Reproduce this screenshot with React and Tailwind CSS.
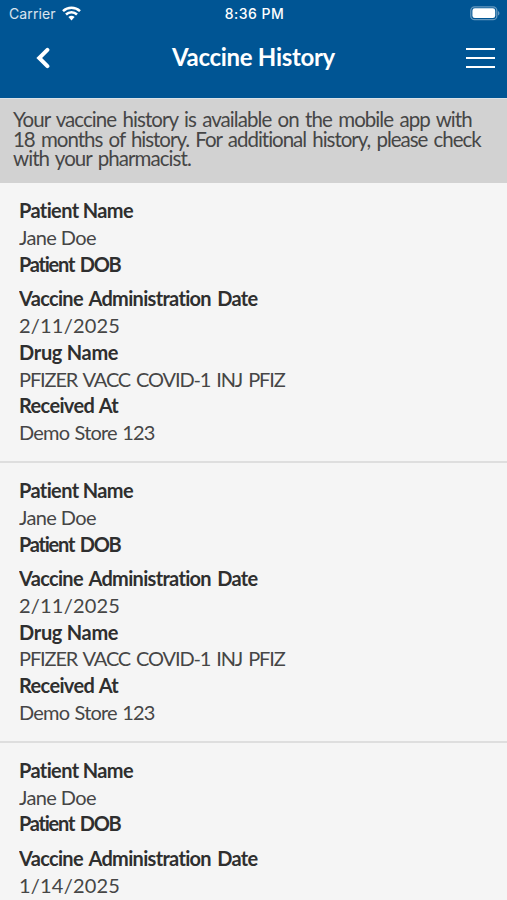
import { clsx } from "clsx";

const records = [
  { name: "Jane Doe", date: "2/11/2025", drug: "PFIZER VACC COVID-1 INJ PFIZ", store: "Demo Store 123" },
  { name: "Jane Doe", date: "2/11/2025", drug: "PFIZER VACC COVID-1 INJ PFIZ", store: "Demo Store 123" },
  { name: "Jane Doe", date: "1/14/2025" },
];

function StatusBar() {
  return (
    <div className="grid h-[27px] grid-cols-3 items-center pr-[7px] pl-[9px] font-['Inter',sans-serif] text-[14px]">
      <div className="flex items-center gap-[6px]">
        <span className="tracking-[0.1px] text-white/85">Carrier</span>
        <svg width="19" height="15" viewBox="0 0 19 15" fill="none" stroke="white" strokeWidth="2.5">
          <path d="M1 5.1a12.3 12.3 0 0 1 17 0" />
          <path d="M4 8.5a7.8 7.8 0 0 1 11 0" />
          <path d="M9.5 14.4 6.4 11.1a4.5 4.5 0 0 1 6.2 0Z" fill="white" stroke="none" />
        </svg>
      </div>
      <span className="text-center font-medium tracking-[0.5px] whitespace-nowrap">8:36 PM</span>
      <svg className="justify-self-end" width="30" height="15" viewBox="0 0 30 15">
        <rect x="0.8" y="0.8" width="26" height="12.9" rx="3.8" fill="none" stroke="white" strokeOpacity="0.4" strokeWidth="1.3" />
        <rect x="2.4" y="2.3" width="22.8" height="9.8" rx="2.4" fill="white" />
        <path d="M28.2 5v4.6c1.6-.8 1.6-3.8 0-4.6Z" fill="white" fillOpacity="0.5" />
      </svg>
    </div>
  );
}

function Header() {
  return (
    <header className="h-[98px] shrink-0 bg-[#005594] text-white">
      <StatusBar />
      <div className="grid h-[61px] grid-cols-[100px_1fr_100px] items-center">
        <svg className="ml-[36px]" width="15" height="22" viewBox="0 0 15 22" fill="none" stroke="white" strokeWidth="4" strokeLinecap="round">
          <path d="M11.4 2.8 3.2 11l8.2 8.2" />
        </svg>
        <h1 className="pb-[2px] text-center text-[24px] font-bold tracking-[-0.3px] whitespace-nowrap">Vaccine History</h1>
        <div className="mr-[12px] flex flex-col gap-[7px] justify-self-end">
          <span className="h-[2px] w-[29px] bg-white" />
          <span className="h-[2px] w-[29px] bg-white" />
          <span className="h-[2px] w-[29px] bg-white" />
        </div>
      </div>
    </header>
  );
}

function Row({ children, className }) {
  return <div className={clsx("h-[26.8px] overflow-hidden leading-[26.8px] whitespace-nowrap", className)}>{children}</div>;
}

function Label({ children, className }) {
  return <Row className={clsx("text-[20px] font-bold text-[#2f2f2f]", className)}>{children}</Row>;
}

function Value({ children, className }) {
  return <Row className={clsx("text-[20px] text-[#464646]", className)}>{children}</Row>;
}

function Record({ record }) {
  return (
    <article className="h-[279.8px] shrink-0 border-b-2 border-[#dedede] pt-[14.2px] pl-[19px]">
      <Label className="tracking-[-0.62px]">Patient Name</Label>
      <Value className="tracking-[-0.62px]">{record.name}</Value>
      <Label className="tracking-[-1.25px] [word-spacing:2px]">Patient DOB</Label>
      <Label className="mt-[7.6px] tracking-[-0.68px] [word-spacing:2px]">Vaccine Administration Date</Label>
      <Value className="tracking-[0.2px]">{record.date}</Value>
      {record.drug && (
        <>
          <Label className="tracking-[-0.3px]">Drug Name</Label>
          <Value className="tracking-[-1.13px] [word-spacing:2px]">{record.drug}</Value>
        </>
      )}
      {record.store && (
        <>
          <Label className="tracking-[-0.65px] [word-spacing:1px]">Received At</Label>
          <Value className="tracking-[-0.8px] [word-spacing:1px]">{record.store}</Value>
        </>
      )}
    </article>
  );
}

export default function App() {
  return (
    <main className="flex h-[900px] w-[507px] flex-col overflow-hidden bg-[#f5f5f5] font-['Lato',sans-serif]">
      <Header />
      <div className="h-[85px] shrink-0 border-t border-[#d9e2e8] bg-[#d2d2d2] pt-[11px] pl-[13px] text-[20.5px] leading-[19.7px] whitespace-nowrap text-[#464646] [word-spacing:2px]">
        <p className="tracking-[-0.94px]">Your vaccine history is available on the mobile app with</p>
        <p className="tracking-[-1.02px]">18 months of history. For additional history, please check</p>
        <p className="tracking-[-0.94px]">with your pharmacist.</p>
      </div>
      {records.map((record, i) => (
        <Record key={i} record={record} />
      ))}
    </main>
  );
}
